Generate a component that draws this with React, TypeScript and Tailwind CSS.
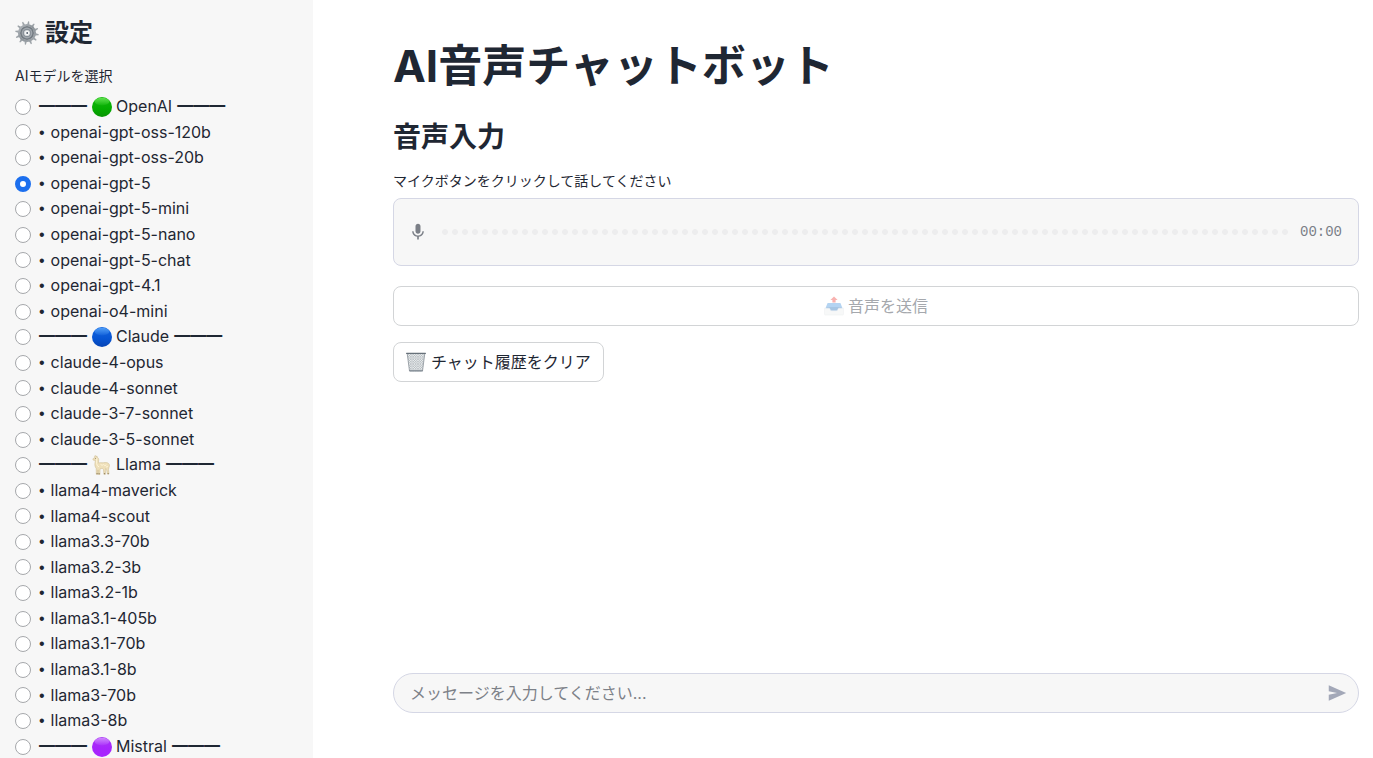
import React, { useState } from "react";
import { MdMic } from "react-icons/md";

type Mark = "green" | "blue" | "llama" | "purple";

interface Group {
  name: string;
  mark: Mark;
  models: string[];
}

const groups: Group[] = [
  {
    name: "OpenAI",
    mark: "green",
    models: [
      "openai-gpt-oss-120b",
      "openai-gpt-oss-20b",
      "openai-gpt-5",
      "openai-gpt-5-mini",
      "openai-gpt-5-nano",
      "openai-gpt-5-chat",
      "openai-gpt-4.1",
      "openai-o4-mini",
    ],
  },
  {
    name: "Claude",
    mark: "blue",
    models: ["claude-4-opus", "claude-4-sonnet", "claude-3-7-sonnet", "claude-3-5-sonnet"],
  },
  {
    name: "Llama",
    mark: "llama",
    models: [
      "llama4-maverick",
      "llama4-scout",
      "llama3.3-70b",
      "llama3.2-3b",
      "llama3.2-1b",
      "llama3.1-405b",
      "llama3.1-70b",
      "llama3.1-8b",
      "llama3-70b",
      "llama3-8b",
    ],
  },
  { name: "Mistral", mark: "purple", models: [] },
];

const ballColors = {
  green: ["#5fe04e", "#14b80e", "#04ac00", "#089404"],
  blue: ["#4f9cf5", "#1466e0", "#0654d2", "#0644b4"],
  purple: ["#cf86ff", "#a836f5", "#a724fc", "#a824ff"],
};

function Ball({ color }: { color: "green" | "blue" | "purple" }) {
  const [shine, top, body, base] = ballColors[color];
  return (
    <svg viewBox="0 0 20 20" className="size-5 shrink-0" aria-hidden="true">
      <defs>
        <linearGradient id={`body-${color}`} x1="0" y1="0" x2="0" y2="1">
          <stop offset="0" stopColor={top} />
          <stop offset="0.6" stopColor={body} />
          <stop offset="1" stopColor={base} />
        </linearGradient>
        <linearGradient id={`shine-${color}`} x1="0" y1="0" x2="0" y2="1">
          <stop offset="0" stopColor={shine} />
          <stop offset="1" stopColor={shine} stopOpacity="0.1" />
        </linearGradient>
      </defs>
      <circle cx="10" cy="10" r="10" fill={`url(#body-${color})`} />
      <ellipse cx="10" cy="4.6" rx="7.4" ry="3.8" fill={`url(#shine-${color})`} />
    </svg>
  );
}

function Llama() {
  return (
    <svg viewBox="0 0 20 20" className="size-5 shrink-0" aria-hidden="true">
      <path
        d="M2.6 1.2 3.3.4l.7 1.4 1-.9.3 1.5c1.1.4 1.5 1.3 1.4 2.5L6.4 8c1.7-.6 3.2-.1 5-.3 2.4-.4 4.3-.3 5.4 1 .9 1 .8 2.4.2 3.5l-.5 2.1.5 4.7h-1.6l-.8-4.2-.9-1.3-.3 1.6.1 4.2h-1.6l-.4-4.6-1-1.2-2.2.1-.3 1.7v4.2H6.4L6 14.900l-.2 4.4H4.300L4.200 13.500C3.100 12 2.700 10.400 2.900 8.500L3.400 5.400 1.500 5.200C.7 4.900.7 3.900 1.300 3.400l1.500-.8z"
        fill="#eedfb9"
        stroke="#cbb98d"
        strokeWidth="0.5"
      />
      <path d="M4.700 3.500 4.600 8.600q.4 2.400 2.400 3.300M8.500 9.300l1.600 1 1.500-.8 1.300 1.200 1.500-.9M14 12l1.900-.5" fill="none" stroke="#fff6da" strokeWidth="0.900" />
      <path d="M4.500 18.700h1.200M6.500 18.700h1.200M11.900 18.700h1.200M15.600 18.700h1.200" stroke="#82714f" strokeWidth="0.900" />
      <circle cx="3.500" cy="3.400" r="0.450" fill="#4a3c28" />
    </svg>
  );
}

function Gear() {
  const teeth = Array.from({ length: 12 }, (_, i) => i * 30);
  return (
    <svg viewBox="0 0 24 24" className="size-6 shrink-0" aria-hidden="true">
      <defs>
        <linearGradient id="gear-rim" x1="0" y1="0" x2="1" y2="1">
          <stop offset="0" stopColor="#b3b8bd" />
          <stop offset="0.5" stopColor="#8c9399" />
          <stop offset="1" stopColor="#a3a9ae" />
        </linearGradient>
      </defs>
      {teeth.map((a) => (
        <path key={a} d="M10.900 3.800 11.500.200h1l.8 3.600z" fill="#9da3a8" transform={`rotate(${a + 8} 12 12)`} />
      ))}
      <circle cx="12" cy="12" r="8" fill="none" stroke="url(#gear-rim)" strokeWidth="2.200" />
      <circle cx="12" cy="12" r="7" fill="#737b82" />
      <circle cx="12" cy="12" r="5.400" fill="#a2a8ae" />
      <circle cx="12" cy="12" r="4" fill="#858d95" />
      <circle cx="12" cy="12" r="3.100" fill="#d3d7da" />
      <circle cx="12" cy="12" r="2.200" fill="#f6f7f7" />
      <circle cx="12.200" cy="12" r="0.900" fill="#4e5a68" />
    </svg>
  );
}

function OutboxTray() {
  return (
    <svg viewBox="0 0 20 20" className="size-5 shrink-0 opacity-40" aria-hidden="true">
      <path d="M3.600 7h12.800l2.400 6H1.200z" fill="#4795df" />
      <path d="M2.500 11h15l.5 4H2z" fill="#2472bd" />
      <path d="M.5 12.200h4.700c.9 0 .8 2.600 2.600 2.600h4.400c1.800 0 1.700-2.600 2.600-2.600h4.700v5.800q0 1-1 1h-17q-1 0-1-1z" fill="#eceef0" stroke="#d3d8dc" strokeWidth="0.500" />
      <path d="M10 .5 13.600 4h-2v2.600H8.400V4h-2z" fill="#f0423c" />
    </svg>
  );
}

function Wastebasket() {
  return (
    <svg viewBox="0 0 20 20" className="size-5 shrink-0" aria-hidden="true">
      <defs>
        <pattern id="mesh" width="2.400" height="2.400" patternUnits="userSpaceOnUse">
          <path d="M0 0 2.400 2.400M2.400 0 0 2.400" stroke="#98a0a7" strokeWidth="0.450" />
        </pattern>
      </defs>
      <path d="M1.200 1.500h17.600L16.500 19.300H3.500z" fill="#eceeef" />
      <path d="M1.200 1.500h17.600L16.500 19.300H3.500z" fill="url(#mesh)" />
      <path d="M1.200 1.500 3.500 19M18.800 1.500 16.500 19" stroke="#8a9299" strokeWidth="0.800" />
      <path d="M3.400 18.900h13.200" stroke="#68737d" strokeWidth="1.100" />
      <path d="M.6 1.300h18.800" stroke="#67717a" strokeWidth="1.300" strokeLinecap="round" />
    </svg>
  );
}

function SendIcon() {
  return (
    <svg viewBox="0 0 24 24" className="size-[22px]" fill="currentColor" aria-hidden="true">
      <path d="M3 20.500V14l9-2-9-2V3.500L22 12z" />
    </svg>
  );
}

function GroupMark({ mark }: { mark: Mark }) {
  return mark === "llama" ? <Llama /> : <Ball color={mark} />;
}

function ModelOption({
  value,
  selected,
  onSelect,
  children,
}: {
  value: string;
  selected: string;
  onSelect: (value: string) => void;
  children: React.ReactNode;
}) {
  return (
    <label className="flex items-center gap-2 text-base leading-[1.6] whitespace-pre">
      <input
        type="radio"
        name="model"
        value={value}
        checked={selected === value}
        onChange={() => onSelect(value)}
        className="size-4 shrink-0 appearance-none rounded-full border border-[#a6a8ab] bg-white checked:border-5 checked:border-[#1c6fee]"
      />
      {children}
    </label>
  );
}

function Waveform() {
  return (
    <svg className="h-2 min-w-0 flex-1" aria-hidden="true">
      <defs>
        <pattern id="dots" width="10" height="8" patternUnits="userSpaceOnUse">
          <path d="M3 1h2l2 2v2l-2 2H3L1 5V3z" fill="#ededee" />
        </pattern>
      </defs>
      <rect width="100%" height="8" fill="url(#dots)" />
    </svg>
  );
}

export default function App() {
  const [model, setModel] = useState("openai-gpt-5");
  const [message, setMessage] = useState("");

  return (
    <div className="flex h-screen bg-white font-[Inter,'Noto_Sans_CJK_JP',sans-serif] text-[#1f2733]">
      <aside className="w-[313px] shrink-0 overflow-hidden bg-[#f7f7f7] px-[15px] pt-[17px]">
        <h2 className="flex items-center gap-1.5 text-2xl leading-8 font-bold">
          <Gear />
          設定
        </h2>
        <fieldset>
          <legend className="pt-[17px] pb-2 text-sm leading-5">AIモデルを選択</legend>
          {groups.map((group) => (
            <div key={group.name}>
              <ModelOption value={group.name} selected={model} onSelect={setModel}>
                <span className="flex items-center gap-[5px]">
                  <span>━━━</span>
                  <span className="flex items-center gap-1">
                    <GroupMark mark={group.mark} />
                    <span>{group.name}</span>
                  </span>
                  <span>━━━</span>
                </span>
              </ModelOption>
              {group.models.map((name) => (
                <ModelOption key={name} value={name} selected={model} onSelect={setModel}>
                  <span className="flex items-center gap-1.5">
                    <span className="font-['Liberation_Sans',sans-serif]">•</span>
                    <span>{name}</span>
                  </span>
                </ModelOption>
              ))}
            </div>
          ))}
        </fieldset>
      </aside>

      <main className="flex min-w-0 flex-1 flex-col pt-[38px] pr-3.5 pb-[45px] pl-20">
        <h1 className="text-[44px] leading-[56px] font-bold">AI音声チャットボット</h1>
        <h2 className="mt-[23px] text-[28px] leading-10 font-bold">音声入力</h2>

        <section aria-labelledby="voice-label" className="mt-3.5">
          <p id="voice-label" className="text-sm leading-5">
            マイクボタンをクリックして話してください
          </p>
          <div className="mt-[7px] flex h-[68px] items-center rounded-lg border border-[#d5d7e5] bg-[#f7f7f7] pr-4 pl-3.5">
            <button type="button" aria-label="録音" className="mr-[13px] text-[#7b7f87]">
              <MdMic className="size-5" />
            </button>
            <Waveform />
            <time className="ml-2.5 font-['Liberation_Mono',monospace] text-sm text-[#7b7f87]">00:00</time>
          </div>
        </section>

        <button
          type="button"
          disabled
          className="mt-5 flex h-10 items-center justify-center gap-1 rounded-lg border border-[#d2d4d6] text-base text-[#a5a8ad]"
        >
          <OutboxTray />
          音声を送信
        </button>
        <button
          type="button"
          className="mt-4 flex h-10 items-center gap-[5px] self-start rounded-lg border border-[#d2d4d6] px-3 text-base"
        >
          <Wastebasket />
          チャット履歴をクリア
        </button>

        <form
          onSubmit={(e) => e.preventDefault()}
          className="mt-auto flex h-10 items-center rounded-full border border-[#d5d7e5] bg-[#f7f7f7] pr-2.5 pl-4"
        >
          <input
            type="text"
            aria-label="メッセージ"
            value={message}
            onChange={(e) => setMessage(e.target.value)}
            placeholder="メッセージを入力してください..."
            className="min-w-0 flex-1 bg-transparent text-base outline-none placeholder:text-[#7d8188]"
          />
          <button type="submit" aria-label="送信" className="text-[#a3a8b8]">
            <SendIcon />
          </button>
        </form>
      </main>
    </div>
  );
}
